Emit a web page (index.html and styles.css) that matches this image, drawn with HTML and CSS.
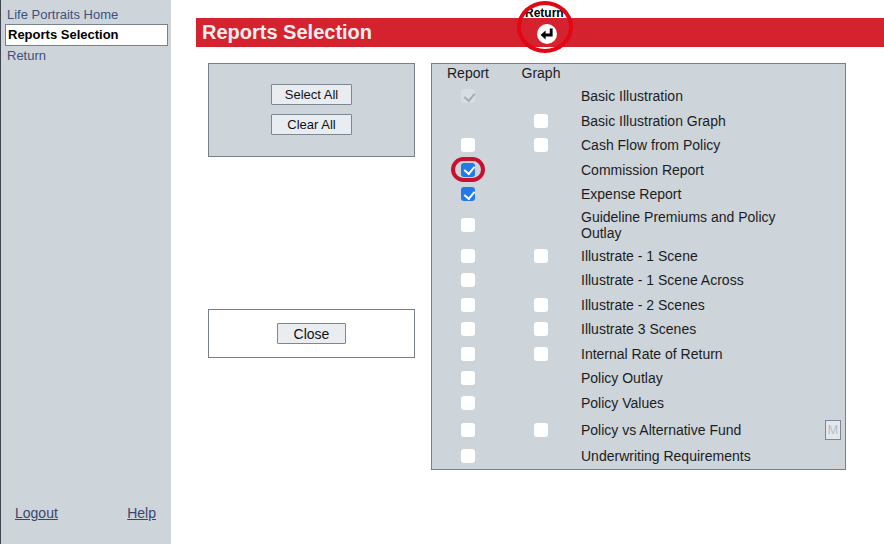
FILE: index.html
```html
<!DOCTYPE html>
<html>

<head>
    <meta http-equiv="content-type" content="text/html; charset=utf-8" />
    <title>Reports Selection</title>
    <link rel="stylesheet" href="styles.css">
</head>

<body>
    <div class="page">
        <!-- Left menu -->
        <aside class="sidebar">
            <nav class="side-nav">
                <a class="side-link" href="#">Life Portraits Home</a>
                <a class="side-link active" href="#">Reports Selection</a>
                <a class="side-link" href="#">Return</a>
            </nav>
            <div class="side-footer">
                <a href="#">Logout</a>
                <a href="#">Help</a>
            </div>
        </aside>

        <main class="content">
            <div class="title-bar">
                <h1>Reports Selection</h1>
            </div>

            <!-- Return button and the red ring drawn over it -->
            <div class="return-label">Return</div>
            <div class="return-icon">
                <svg width="20" height="20" viewBox="0 0 20 20">
                    <circle cx="10" cy="10" r="10" fill="#fff" />
                    <path d="M14.2 4.5V11H7.5" fill="none" stroke="#000" stroke-width="2.8" />
                    <path d="M8.6 6.6L3.6 11l5 4.4z" fill="#000" />
                </svg>
            </div>
            <div class="ring ring-return"></div>

            <div class="columns">
                <div class="left-col">
                    <div class="box box-select">
                        <button class="btn btn-wide">Select All</button>
                        <button class="btn btn-wide">Clear All</button>
                    </div>
                    <div class="box box-close">
                        <button class="btn btn-close">Close</button>
                    </div>
                </div>

                <div class="panel">
                    <div class="row row-head">
                        <span class="cell">Report</span>
                        <span class="cell">Graph</span>
                    </div>
                    <div class="row">
                        <span class="cell"><input type="checkbox" checked disabled></span>
                        <span class="cell"></span>
                        <span class="label">Basic Illustration</span>
                    </div>
                    <div class="row">
                        <span class="cell"></span>
                        <span class="cell"><input type="checkbox"></span>
                        <span class="label">Basic Illustration Graph</span>
                    </div>
                    <div class="row">
                        <span class="cell"><input type="checkbox"></span>
                        <span class="cell"><input type="checkbox"></span>
                        <span class="label">Cash Flow from Policy</span>
                    </div>
                    <div class="row">
                        <span class="cell ringed"><input type="checkbox" checked><i class="ring ring-check"></i></span>
                        <span class="cell"></span>
                        <span class="label">Commission Report</span>
                    </div>
                    <div class="row">
                        <span class="cell"><input type="checkbox" checked></span>
                        <span class="cell"></span>
                        <span class="label">Expense Report</span>
                    </div>
                    <div class="row row-double">
                        <span class="cell"><input type="checkbox"></span>
                        <span class="cell"></span>
                        <span class="label">Guideline Premiums and Policy Outlay</span>
                    </div>
                    <div class="row">
                        <span class="cell"><input type="checkbox"></span>
                        <span class="cell"><input type="checkbox"></span>
                        <span class="label">Illustrate - 1 Scene</span>
                    </div>
                    <div class="row">
                        <span class="cell"><input type="checkbox"></span>
                        <span class="cell"></span>
                        <span class="label">Illustrate - 1 Scene Across</span>
                    </div>
                    <div class="row">
                        <span class="cell"><input type="checkbox"></span>
                        <span class="cell"><input type="checkbox"></span>
                        <span class="label">Illustrate - 2 Scenes</span>
                    </div>
                    <div class="row">
                        <span class="cell"><input type="checkbox"></span>
                        <span class="cell"><input type="checkbox"></span>
                        <span class="label">Illustrate 3 Scenes</span>
                    </div>
                    <div class="row">
                        <span class="cell"><input type="checkbox"></span>
                        <span class="cell"><input type="checkbox"></span>
                        <span class="label">Internal Rate of Return</span>
                    </div>
                    <div class="row">
                        <span class="cell"><input type="checkbox"></span>
                        <span class="cell"></span>
                        <span class="label">Policy Outlay</span>
                    </div>
                    <div class="row">
                        <span class="cell"><input type="checkbox"></span>
                        <span class="cell"></span>
                        <span class="label">Policy Values</span>
                    </div>
                    <div class="row row-tall">
                        <span class="cell"><input type="checkbox"></span>
                        <span class="cell"><input type="checkbox"></span>
                        <span class="label">Policy vs Alternative Fund</span>
                        <button class="btn-m">M</button>
                    </div>
                    <div class="row">
                        <span class="cell"><input type="checkbox"></span>
                        <span class="cell"></span>
                        <span class="label">Underwriting Requirements</span>
                    </div>
                </div>
            </div>
        </main>
    </div>
</body>

</html>
```

FILE: styles.css
```css
* {
    box-sizing: border-box;
}

body {
    margin: 0;
    background: #fff;
    color: #1c1c1e;
    font-family: "Liberation Sans", Arial, sans-serif;
    font-size: 14px;
}

.page {
    display: flex;
    height: 544px;
    overflow: hidden;
}

/* Sidebar */
.sidebar {
    flex: 0 0 171px;
    display: flex;
    flex-direction: column;
    justify-content: space-between;
    padding: 5px 3px 23px 0;
    background: #cdd5da;
    border-left: 1px solid #3d4650;
}

.side-nav {
    display: flex;
    flex-direction: column;
}

.side-link {
    height: 19px;
    padding-left: 6px;
    line-height: 19px;
    font-size: 13px;
    color: #41507a;
    text-decoration: none;
}

.side-link.active {
    margin-left: 4px;
    padding-left: 2px;
    height: 22px;
    line-height: 20px;
    background: #fff;
    border: 1px solid #77828c;
    color: #000;
    font-weight: bold;
}

.side-footer {
    display: flex;
    justify-content: space-between;
    padding: 0 12px 0 14px;
}

.side-footer a {
    color: #3b4470;
}

/* Main area */
.content {
    position: relative;
    flex: 1;
    padding: 18px 0 0 25px;
}

.title-bar {
    height: 29px;
    padding-left: 6px;
    background: #d4222f;
}

.title-bar h1 {
    margin: 0;
    font-size: 20px;
    line-height: 29px;
    color: #f6eeee;
}

.return-label {
    position: absolute;
    top: 6px;
    left: 354px;
    font-size: 12px;
    font-weight: bold;
    color: #000;
}

.return-icon {
    position: absolute;
    top: 24px;
    left: 366px;
    height: 20px;
}

.ring {
    position: absolute;
    border: 4px solid #e30613;
    border-radius: 50%;
}

.ring-return {
    top: 1px;
    left: 346px;
    width: 56px;
    height: 52px;
}

.ring-check {
    top: 50%;
    left: 50%;
    width: 34px;
    height: 25px;
    margin: -13px 0 0 -17px;
    border-color: #c8102e;
    border-radius: 13px;
}

.columns {
    display: flex;
    gap: 16px;
    padding: 16px 0 0 12px;
}

.left-col {
    flex: 0 0 207px;
}

.box {
    display: flex;
    flex-direction: column;
    align-items: center;
    border: 1px solid #77808a;
}

.box-select {
    gap: 9px;
    height: 94px;
    padding-top: 20px;
    background: #cdd5da;
}

.box-close {
    height: 49px;
    margin-top: 152px;
    padding-top: 13px;
    background: #fff;
}

.btn {
    height: 21px;
    padding: 0;
    background: #e9edf1;
    border: 1px solid #7d8791;
    border-radius: 1px;
    font-family: inherit;
    font-size: 13px;
    color: #111;
}

.btn-wide {
    width: 81px;
}

.btn-close {
    width: 69px;
    font-size: 14px;
}

/* Report list */
.panel {
    flex: 0 0 415px;
    height: 407px;
    padding-top: 1px;
    background: #cdd5da;
    border: 1px solid #77808a;
}

.row {
    display: grid;
    grid-template-columns: 72px 74px 222px 1fr;
    align-items: center;
    height: 24.5px;
}

.row-head {
    height: 19.2px;
    padding-bottom: 3px;
}

.row-double {
    height: 37px;
    line-height: 16px;
}

.row-tall {
    height: 29px;
}

.cell {
    position: relative;
    display: flex;
    justify-content: center;
    align-items: center;
}

.label {
    padding-left: 3px;
}

input[type="checkbox"] {
    appearance: none;
    position: relative;
    width: 14px;
    height: 14px;
    margin: 0;
    background: #fff;
    border-radius: 3px;
}

input[type="checkbox"]:checked {
    background: #2379e6;
}

input[type="checkbox"]:checked::after {
    content: "";
    position: absolute;
    top: 1.5px;
    left: 4.5px;
    width: 4.5px;
    height: 8px;
    border: solid #fff;
    border-width: 0 2px 2px 0;
    transform: rotate(40deg);
}

input[type="checkbox"]:disabled {
    background: #d8dee2;
}

input[type="checkbox"]:disabled::after {
    border-color: #a4acb3;
}

.btn-m {
    justify-self: start;
    width: 16px;
    height: 20px;
    margin-left: 25px;
    padding: 0;
    background: #e3e8ec;
    border: 1px solid #7d8791;
    font-family: inherit;
    font-size: 13px;
    color: #b6bec6;
}
```
